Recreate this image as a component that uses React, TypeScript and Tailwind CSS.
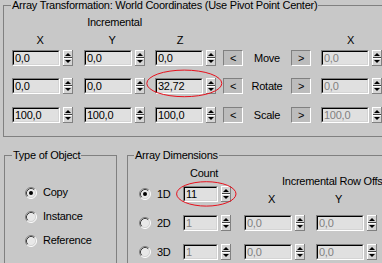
import React from "react";

function Spinner() {
  return (
    <svg width="10" height="16" viewBox="0 0 10 16" className="block shrink-0">
      <rect x="0" y="0" width="10" height="16" fill="#d4d4d4" />
      <line x1="0" y1="0.5" x2="10" y2="0.5" stroke="#ffffff" />
      <line x1="0.5" y1="0" x2="0.5" y2="16" stroke="#ffffff" />
      <line x1="0" y1="15.5" x2="10" y2="15.5" stroke="#808080" />
      <line x1="9.5" y1="0" x2="9.5" y2="16" stroke="#808080" />
      <line x1="1" y1="7.5" x2="9" y2="7.5" stroke="#404040" />
      <line x1="1" y1="8.5" x2="9" y2="8.5" stroke="#ffffff" />
      <polygon points="2,6 8,6 5,3" fill="#000000" />
      <polygon points="2,10 8,10 5,13" fill="#000000" />
    </svg>
  );
}

function Field({
  className,
  value,
  disabled,
}: {
  className: string;
  value: string;
  disabled?: boolean;
}) {
  return (
    <div
      className={`${className} h-[16px] shrink-0 border border-t-[#808080] border-l-[#808080] border-b-white border-r-white`}
    >
      <div
        className={`h-full border border-t-black border-l-black border-b-[#d4d4d4] border-r-[#d4d4d4] bg-[#e0e0e0] pl-[1px] leading-[12px] whitespace-nowrap overflow-hidden ${
          disabled ? "text-[#808080]" : "text-black"
        }`}
      >
        {value}
      </div>
    </div>
  );
}

function Btn({ children }: { children: React.ReactNode }) {
  return (
    <div className="w-[20px] h-[16px] shrink-0 border border-t-[#808080] border-l-[#808080] border-b-white border-r-white bg-[#bcbcbc] flex items-center justify-center leading-[12px]">
      {children}
    </div>
  );
}

function Radio({ checked }: { checked?: boolean }) {
  return (
    <svg width="12" height="12" viewBox="0 0 12 12" className="block shrink-0">
      <circle cx="6" cy="6" r="5" fill="#e8e8e8" />
      <path d="M 2.11 9.89 A 5.5 5.5 0 0 1 9.89 2.11" fill="none" stroke="#808080" />
      <path d="M 9.89 2.11 A 5.5 5.5 0 0 1 2.11 9.89" fill="none" stroke="#ffffff" />
      <path d="M 2.82 9.18 A 4.5 4.5 0 0 1 9.18 2.82" fill="none" stroke="#404040" />
      <path d="M 9.18 2.82 A 4.5 4.5 0 0 1 2.82 9.18" fill="none" stroke="#d4d4d4" />
      {checked && <circle cx="6" cy="6" r="2" fill="#000000" />}
    </svg>
  );
}

function TransformRow({
  className,
  a,
  b,
  c,
  label,
  right,
}: {
  className: string;
  a: string;
  b: string;
  c: string;
  label: string;
  right: string;
}) {
  return (
    <div className={`${className} flex items-center h-[16px]`}>
      <Field className="w-[48px]" value={a} />
      <div className="ml-[3px]">
        <Spinner />
      </div>
      <div className="ml-[11px]">
        <Field className="w-[48px]" value={b} />
      </div>
      <div className="ml-[3px]">
        <Spinner />
      </div>
      <div className="ml-[10px]">
        <Field className="w-[48px]" value={c} />
      </div>
      <div className="ml-[3px]">
        <Spinner />
      </div>
      <div className="ml-[7px]">
        <Btn>&lt;</Btn>
      </div>
      <div className="w-[48px] shrink-0 text-center">{label}</div>
      <Btn>&gt;</Btn>
      <div className="ml-[10px]">
        <Field className="w-[48px]" value={right} disabled />
      </div>
      <div className="ml-[3px]">
        <Spinner />
      </div>
    </div>
  );
}

function RadioRow({ label, checked }: { label: string; checked?: boolean }) {
  return (
    <div className="flex items-center h-[13px]">
      <Radio checked={checked} />
      <span className="ml-[6px] whitespace-nowrap">{label}</span>
    </div>
  );
}

function DimRow({
  className,
  label,
  checked,
  count,
  first,
}: {
  className: string;
  label: string;
  checked?: boolean;
  count: string;
  first?: boolean;
}) {
  return (
    <div className={`${className} flex items-center h-[16px] pl-[11px]`}>
      <div className="w-[44px] shrink-0 flex items-center">
        <Radio checked={checked} />
        <span className="ml-[6px]">{label}</span>
      </div>
      <Field className="w-[35px]" value={count} disabled={!first} />
      <div className="ml-[3px]">
        <Spinner />
      </div>
      {first ? (
        <>
          <span className="self-start mt-[7px] ml-[37px]">X</span>
          <span className="self-start mt-[7px] ml-[60px]">Y</span>
        </>
      ) : (
        <>
          <div className="ml-[13px]">
            <Field className="w-[48px]" value="0,0" disabled />
          </div>
          <div className="ml-[3px]">
            <Spinner />
          </div>
          <div className="ml-[11px]">
            <Field className="w-[48px]" value="0,0" disabled />
          </div>
          <div className="ml-[3px]">
            <Spinner />
          </div>
        </>
      )}
    </div>
  );
}

export default function App() {
  return (
    <div className="relative w-[382px] h-[263px] overflow-hidden bg-[#c8c8c8] text-black text-[11px] leading-[13px] tracking-[-0.25px] font-['Liberation_Sans',Arial,sans-serif]">
      <fieldset className="ml-[3px] w-[420px] h-[137px] border border-[#808080]">
        <legend className="ml-[7px] px-[1px] h-[11px] leading-[11px] whitespace-nowrap">
          Array Transformation: World Coordinates (Use Pivot Point Center)
        </legend>
        <div className="pl-[8px]">
          <div className="mt-[5px] ml-[72px] w-[61px] text-center">Incremental</div>
          <div className="mt-[5px] flex">
            <div className="w-[61px] shrink-0 text-center pr-[5px]">X</div>
            <div className="ml-[11px] w-[61px] shrink-0 text-center pr-[5px]">Y</div>
            <div className="ml-[10px] w-[61px] shrink-0 text-center pr-[11px]">Z</div>
            <div className="ml-[105px] w-[61px] shrink-0 text-center pr-[2px]">X</div>
          </div>
          <TransformRow className="mt-[3px]" a="0,0" b="0,0" c="0,0" label="Move" right="0,0" />
          <TransformRow className="mt-[12px]" a="0,0" b="0,0" c="32,72" label="Rotate" right="0,0" />
          <TransformRow
            className="mt-[13px]"
            a="100,0"
            b="100,0"
            c="100,0"
            label="Scale"
            right="100,0"
          />
        </div>
      </fieldset>

      <div className="mt-[13px] flex items-start">
        <fieldset className="ml-[4px] w-[113px] h-[130px] shrink-0 border border-[#808080]">
          <legend className="ml-[7px] px-[1px] h-[11px] leading-[11px] whitespace-nowrap">
            Type of Object
          </legend>
          <div className="pl-[20px] pt-[25px] flex flex-col gap-[11px]">
            <RadioRow label="Copy" checked />
            <RadioRow label="Instance" />
            <RadioRow label="Reference" />
          </div>
        </fieldset>

        <fieldset className="ml-[10px] w-[300px] h-[130px] shrink-0 border border-[#808080]">
          <legend className="ml-[6px] px-[1px] h-[11px] leading-[11px] whitespace-nowrap">
            Array Dimensions
          </legend>
          <div className="pt-[6px]">
            <div className="flex items-start h-[19px]">
              <div className="w-[154px] shrink-0 pl-[62px]">Count</div>
              <div className="mt-[8px] whitespace-nowrap">Incremental Row Offset</div>
            </div>
            <DimRow className="" label="1D" checked count="11" first />
            <DimRow className="mt-[13px]" label="2D" count="1" />
            <DimRow className="mt-[13px]" label="3D" count="1" />
          </div>
        </fieldset>
      </div>

      <svg
        className="absolute left-0 top-0 pointer-events-none"
        width="382"
        height="263"
        viewBox="0 0 382 263"
      >
        <ellipse cx="184.3" cy="83.4" rx="37.5" ry="13.3" fill="none" stroke="#e8101c" strokeWidth="1" />
        <ellipse cx="206.3" cy="193.9" rx="29.7" ry="12.2" fill="none" stroke="#e8101c" strokeWidth="1" />
      </svg>
    </div>
  );
}
